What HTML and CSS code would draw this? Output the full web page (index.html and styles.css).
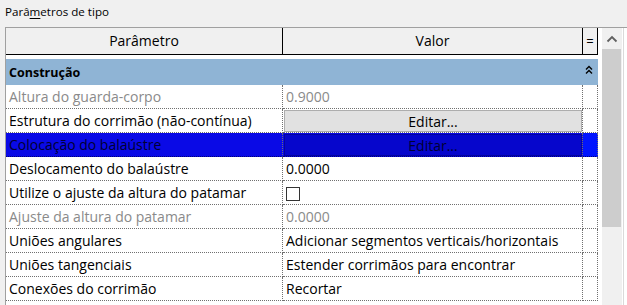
FILE: index.html
```html
<!DOCTYPE html>
<html lang="pt-br">
<head>
    <meta charset="UTF-8">
    <title>Parâmetros de tipo</title>
    <link rel="stylesheet" href="styles.css">
</head>
<body>
    <div class="title">Parâ<u>m</u>etros de tipo</div>
    <div class="frame">
        <div class="grid">
            <div class="head c1">Parâmetro</div>
            <div class="head c2">Valor</div>
            <div class="head c3">=</div>
            <div class="spacer"></div>

            <div class="group">
                <span>Construção</span>
                <svg class="collapse" width="8" height="10" viewBox="0 0 8 10">
                    <path d="M1 4.5 L4 1.5 L7 4.5 M1 8.5 L4 5.5 L7 8.5" fill="none" stroke="#000" stroke-width="1.4"/>
                </svg>
            </div>

            <div class="cell c1 dim">Altura do guarda-corpo</div>
            <div class="cell c2 dim">0.9000</div>
            <div class="cell c3"></div>

            <div class="cell c1">Estrutura do corrimão (não-contínua)</div>
            <div class="cell c2 btn-cell"><div class="btn">Editar...</div></div>
            <div class="cell c3"></div>

            <div class="cell c1 sel">Colocação do balaústre</div>
            <div class="cell c2 sel btn-cell"><div class="btn sel-btn">Editar...</div></div>
            <div class="cell c3 sel sel-end"></div>

            <div class="cell c1">Deslocamento do balaústre</div>
            <div class="cell c2">0.0000</div>
            <div class="cell c3"></div>

            <div class="cell c1">Utilize o ajuste da altura do patamar</div>
            <div class="cell c2"><span class="check"></span></div>
            <div class="cell c3"></div>

            <div class="cell c1 dim">Ajuste da altura do patamar</div>
            <div class="cell c2 dim">0.0000</div>
            <div class="cell c3"></div>

            <div class="cell c1">Uniões angulares</div>
            <div class="cell c2">Adicionar segmentos verticais/horizontais</div>
            <div class="cell c3"></div>

            <div class="cell c1">Uniões tangenciais</div>
            <div class="cell c2">Estender corrimãos para encontrar</div>
            <div class="cell c3"></div>

            <div class="cell c1">Conexões do corrimão</div>
            <div class="cell c2">Recortar</div>
            <div class="cell c3"></div>
        </div>
        <div class="scrollbar">
            <div class="arrow">
                <svg width="12" height="8" viewBox="0 0 12 8">
                    <path d="M1.5 6.5 L6 2 L10.5 6.5" fill="none" stroke="#606060" stroke-width="1.8"/>
                </svg>
            </div>
            <div class="thumb"></div>
        </div>
        <div class="edge"></div>
    </div>
</body>
</html>
```

FILE: styles.css
```css
body {
    margin: 0;
    background-color: #f0f0f0;
    font-family: "Open Sans", "Noto Sans", sans-serif;
    font-size: 12px;
    color: #000;
    height: 305px;
    overflow: hidden;
}

.title {
    padding: 3px 0 0 5px;
    height: 24px;
    box-sizing: border-box;
    line-height: 17px;
    font-size: 11.6px;
}

.title u {
    text-decoration-thickness: 1px;
    text-underline-offset: 2px;
}

.frame {
    display: flex;
    margin-left: 5px;
    border-top: 1px solid #a0a0a0;
    border-left: 1px solid #a0a0a0;
    margin-top: 3px;
    background-color: #fff;
    height: 278px;
}

.grid {
    display: grid;
    grid-template-columns: 277px 300px 15px;
    grid-template-rows: 27px 4px 26px;
    grid-auto-rows: 24px;
    width: 594px;
    align-content: start;
}

.head {
    height: 27px;
    background-color: #f0f0f0;
    border-bottom: 1px solid #000;
    border-right: 1px solid #000;
    box-sizing: border-box;
    display: flex;
    align-items: center;
    justify-content: center;
    font-size: 14px;
    padding-bottom: 1px;
}

.head.c3 {
    font-size: 13px;
}

.spacer {
    grid-column: 1 / 4;
}

.group {
    grid-column: 1 / 4;
    background-color: #8fb4d5;
    font-weight: bold;
    font-size: 12.5px;
    display: flex;
    align-items: center;
    justify-content: space-between;
    padding: 0 5px 0 3px;
}

.collapse {
    margin-top: -4px;
}

.cell {
    border-bottom: 1px dotted #707070;
    border-right: 1px dotted #707070;
    box-sizing: border-box;
    display: flex;
    align-items: center;
    padding-left: 3px;
    white-space: nowrap;
    font-size: 14px;
}

.cell.c1 {
    padding-left: 3px;
}

.dim {
    color: #8a8a8a;
}

.btn-cell {
    padding: 1px 0 0 1px;
    align-items: stretch;
}

.btn {
    flex: 1;
    background-color: #e1e1e1;
    border: 1px solid #adadad;
    display: flex;
    align-items: center;
    justify-content: center;
}

.sel {
    background-color: #0a0ae6;
    color: #000033;
    border-bottom-color: #00007a;
}

.sel-btn {
    background-color: #0606cc;
    border-color: #0404a0;
}

.sel-end {
    background-color: #0014ff;
}

.check {
    width: 14px;
    height: 14px;
    border: 1px solid #333;
    box-sizing: border-box;
    background-color: #fff;
    margin-top: 2px;
}

.scrollbar {
    width: 20px;
    margin-left: 2px;
    background-color: #f0f0f0;
    display: flex;
    flex-direction: column;
}

.arrow {
    height: 21px;
    display: flex;
    align-items: center;
    justify-content: center;
}

.thumb {
    height: 178px;
    background-color: #cdcdcd;
    margin: 0 1px 0 0;
}

.edge {
    width: 1px;
    margin-left: 1px;
    background-color: #dadada;
}
```
